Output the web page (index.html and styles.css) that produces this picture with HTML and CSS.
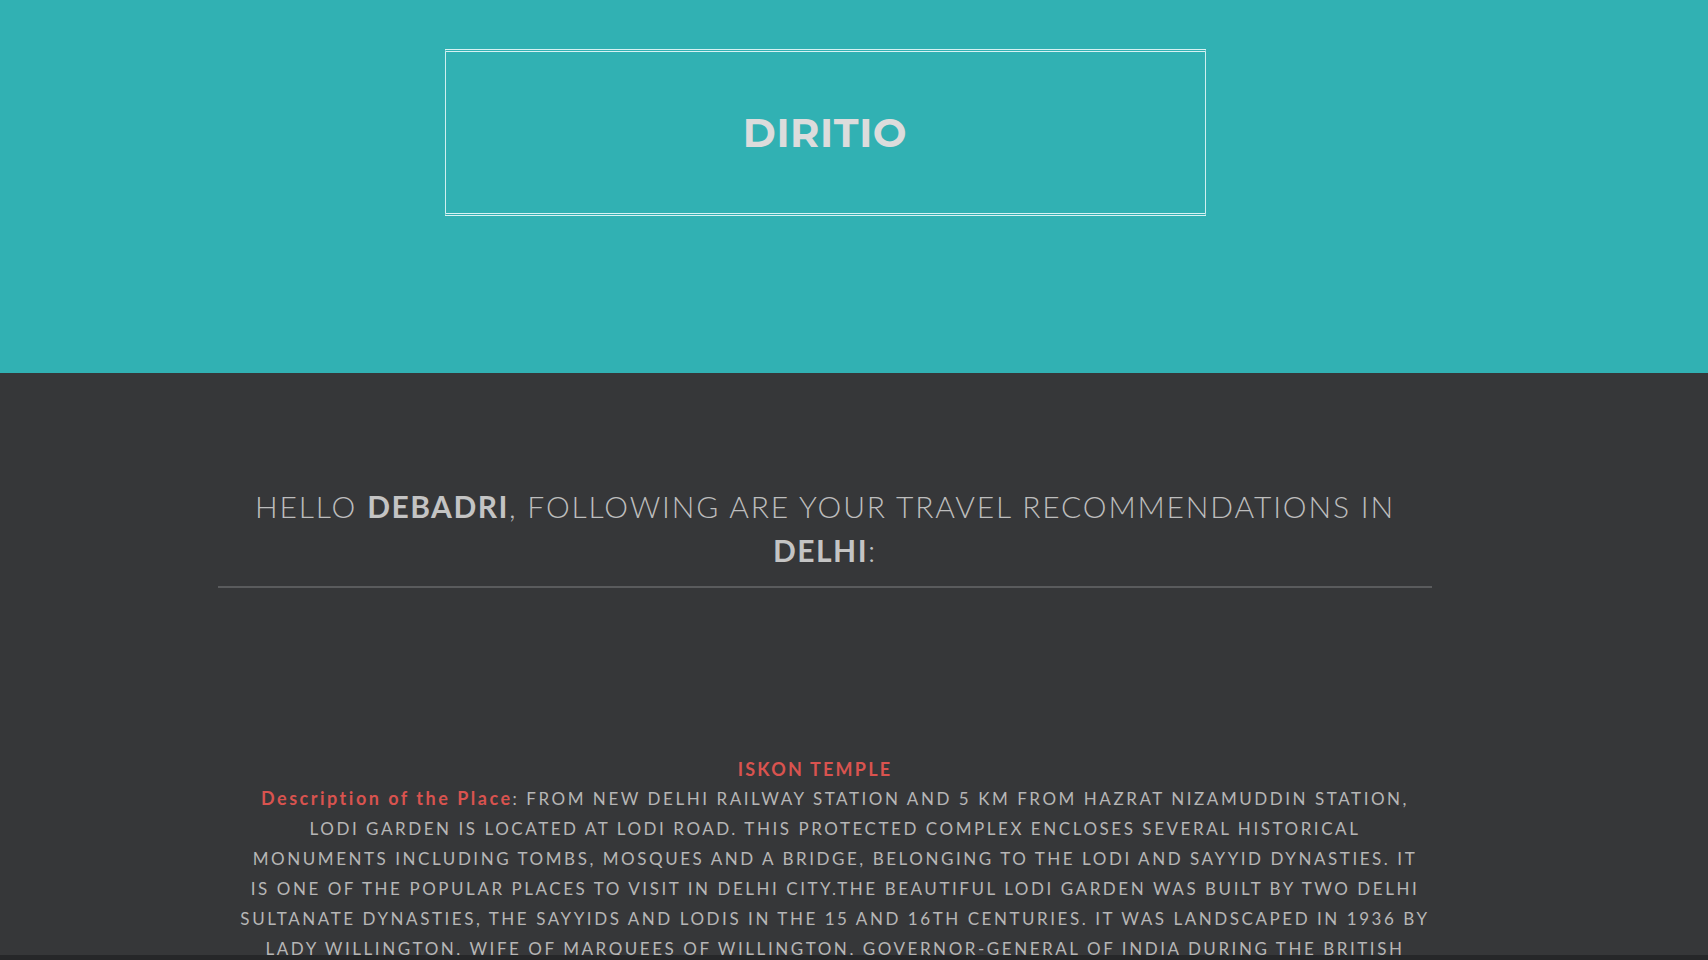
FILE: index.html
```html
<!DOCTYPE html>
<html lang="en">
<head>
<meta charset="utf-8">
<title>Diritio</title>
<link rel="stylesheet" href="styles.css">
</head>
<body>
<div class="page">
  <header class="hero">
    <div class="brand">
      <h1 class="brand-title">DIRITIO</h1>
    </div>
  </header>
  <main class="content">
    <div class="container">
      <h2 class="greeting">Hello <b>Debadri</b>, following are your travel recommendations in <b>Delhi</b>:</h2>
      <hr class="rule">
      <section class="place">
        <h3 class="place-name">Iskon Temple</h3>
        <p class="place-desc"><span class="label">Description of the Place</span>: From New Delhi railway station and 5 km from Hazrat Nizamuddin station,<br>Lodi Garden is located at Lodi Road. This protected complex encloses several historical<br>monuments including tombs, mosques and a bridge, belonging to the Lodi and Sayyid dynasties. It<br>is one of the popular places to visit in Delhi city.The beautiful Lodi Garden was built by two Delhi<br>Sultanate dynasties, the Sayyids and Lodis in the 15 and 16th centuries. It was landscaped in 1936 by<br>Lady Willington, wife of Marquees of Willington, Governor-General of India during the British<br>rule.</p>
      </section>
    </div>
  </main>
</div>
<div class="bottom-bar"></div>
</body>
</html>
```

FILE: styles.css
```css
* { box-sizing: border-box; }

html, body {
  margin: 0;
  padding: 0;
  background: #363739;
  font-family: Lato, "Open Sans", sans-serif;
}

.page {
  display: flex;
  flex-direction: column;
}

.hero {
  background: #31b1b3;
  height: 373px;
  padding: 49px 58px 0 0;
  display: flex;
  justify-content: center;
  align-items: flex-start;
}

.brand {
  width: 761px;
  height: 167px;
  border-top: 3px double rgba(235, 250, 250, 0.9);
  border-bottom: 3px double rgba(235, 250, 250, 0.9);
  border-left: 1px solid rgba(235, 250, 250, 0.85);
  border-right: 1px solid rgba(235, 250, 250, 0.85);
  display: flex;
  align-items: center;
  justify-content: center;
}

.brand-title {
  margin: 0;
  font-family: Montserrat, "Open Sans", Lato, sans-serif;
  font-weight: 700;
  font-size: 40px;
  letter-spacing: 0.6px;
  color: #dcdcdc;
  line-height: 1;
}

.content {
  padding: 0 58px 0 0;
  display: flex;
  justify-content: center;
}

.container {
  width: 1214px;
  padding-top: 111px;
  padding-bottom: 120px;
}

.greeting {
  margin: 0;
  text-align: center;
  text-transform: uppercase;
  font-weight: 300;
  font-size: 30px;
  line-height: 44px;
  letter-spacing: 1.85px;
  color: #bdbdbd;
  padding: 0 30px;
}

.greeting b {
  font-weight: 700;
  color: #c4c4c4;
  letter-spacing: 1.5px;
}

.rule {
  margin: 14px 0 0;
  height: 1px;
  border: 0;
  border-top: 1px solid #5a5b5d;
  border-bottom: 1px solid #5a5b5d;
}

.place {
  margin-top: 167px;
}

.place-name {
  margin: 0;
  padding-right: 20px;
  text-align: center;
  text-transform: uppercase;
  font-weight: 700;
  font-size: 18px;
  line-height: 28px;
  letter-spacing: 2.2px;
  color: #d9534f;
}

.place-desc {
  margin: 0 -10px;
  padding-left: 20px;
  text-align: center;
  text-transform: uppercase;
  font-weight: 400;
  font-size: 17px;
  line-height: 30px;
  letter-spacing: 2.55px;
  color: #b6b6b6;
}

.label {
  text-transform: none;
  font-weight: 700;
  font-size: 18px;
  color: #d9534f;
  letter-spacing: 2.5px;
}

.bottom-bar {
  position: fixed;
  left: 0;
  right: 0;
  bottom: 0;
  height: 5px;
  background: #262729;
}
```
